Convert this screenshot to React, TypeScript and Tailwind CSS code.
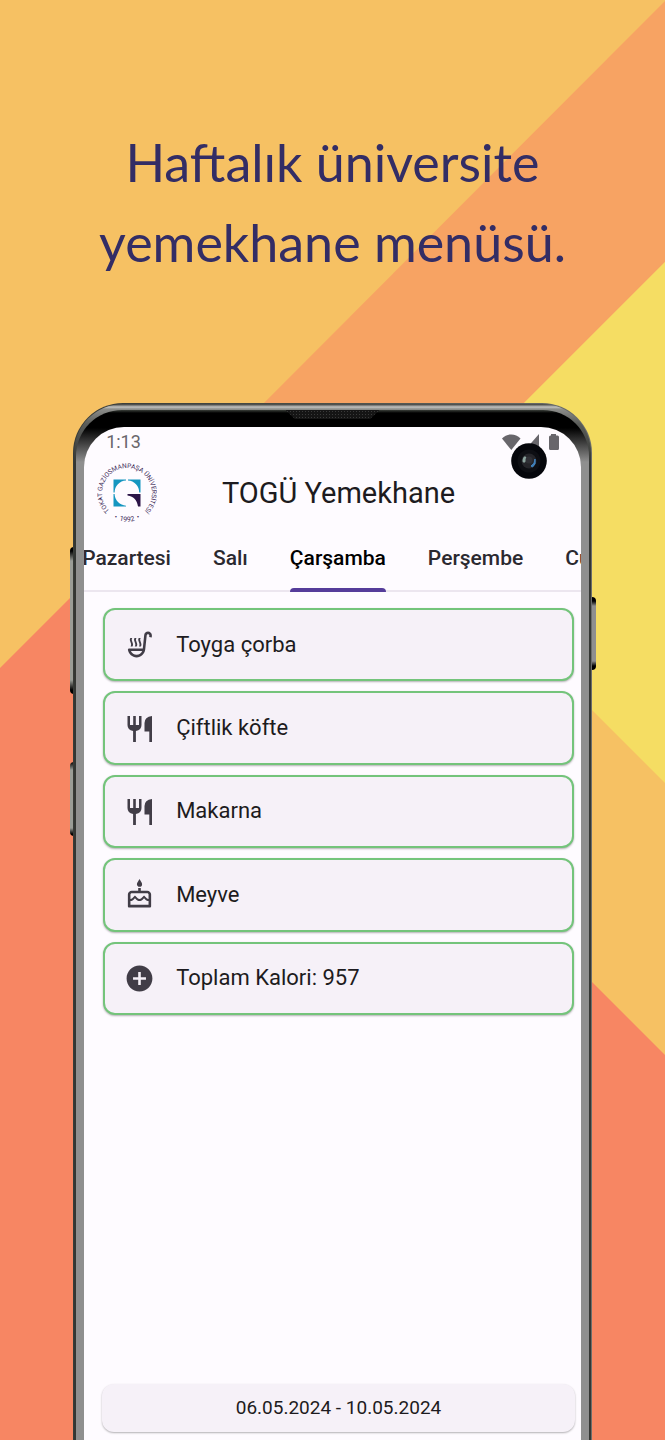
import { MdAddCircle, MdOutlineCake, MdOutlineSoupKitchen } from 'react-icons/md';
import type { ComponentType } from 'react';

function CutleryIcon({ className }: { className?: string }) {
  return (
    <svg className={className} viewBox="0 0 31 31" fill="currentColor" aria-hidden="true">
      <path d="M3.500 3H6V12H9.200V3H11.800V12H15V3H17.500V12Q17.500 17 11.900 18V29H9.100V18Q3.500 17 3.500 12Z" />
      <path d="M28 3V29H25.300V18.500H20.500V10Q20.500 4 28 3Z" />
    </svg>
  );
}

const days = ['Pazartesi', 'Salı', 'Çarşamba', 'Perşembe', 'Cuma'];
const activeDay = 'Çarşamba';

const dishes: { name: string; icon: ComponentType<{ className?: string }> }[] = [
  { name: 'Toyga çorba', icon: MdOutlineSoupKitchen },
  { name: 'Çiftlik köfte', icon: CutleryIcon },
  { name: 'Makarna', icon: CutleryIcon },
  { name: 'Meyve', icon: MdOutlineCake },
  { name: 'Toplam Kalori: 957', icon: MdAddCircle },
];

function Backdrop() {
  return (
    <svg
      className="absolute inset-0 h-full w-full"
      viewBox="0 0 665 1440"
      preserveAspectRatio="xMidYMid slice"
      aria-hidden="true"
    >
      <rect width="665" height="1440" fill="#f6c163" />
      <path d="M665 1V262L400 527L200 467Z" fill="#f7a363" />
      <path d="M665 262V783L400 518V527Z" fill="#f5dd63" />
      <path d="M0 668L200 468V590L665 1055V1440H0Z" fill="#f78663" />
    </svg>
  );
}

function UniversityLogo() {
  return (
    <svg className="size-[60px] shrink-0" viewBox="0 0 60 60" role="img" aria-label="Tokat Gaziosmanpaşa Üniversitesi">
      <defs>
        <path id="seal-name" d="M14.600 49.700A25 25 0 1 1 45.400 49.700" />
        <path id="seal-year" d="M8 48.500A29 29 0 0 0 52 48.500" />
      </defs>
      <path
        fill="#1596c0"
        d="M16.500 16.500H29V17.500A12 12 0 0 0 17.600 29.500H16.500ZM31 16.500H43.500V29.500H42.200A12 12 0 0 0 31 17.500ZM16.500 31H17.600A12 12 0 0 0 29 42.700V43.500H16.500Z"
      />
      <path fill="#2c1548" d="M30.500 31H43.500V43.500H41C40 37 37 33.500 30.500 32.500Z" />
      <text fill="#3d2a58" fontFamily="Roboto, sans-serif" fontSize="6.500">
        <textPath href="#seal-name" startOffset="50%" textAnchor="middle">
          TOKAT GAZİOSMANPAŞA ÜNİVERSİTESİ
        </textPath>
      </text>
      <text fill="#3d2a58" fontFamily="Roboto, sans-serif" fontSize="7">
        <textPath href="#seal-year" startOffset="50%" textAnchor="middle">
          {'•\u00a0\u00a01992\u00a0\u00a0•'}
        </textPath>
      </text>
    </svg>
  );
}

function StatusIcons() {
  return (
    <svg className="h-[18px] w-[58px]" viewBox="0 0 58 18" fill="#68666b" aria-hidden="true">
      <path d="M1 5.500C6 0 14.500 0 19.500 5.500L10.300 17Z" />
      <path d="M38 1V17H24Z" />
      <path d="M50 1H55V2.500H56.500Q58 2.500 58 4V15.500Q58 17 56.500 17H49.500Q48 17 48 15.500V4Q48 2.500 49.500 2.500H50Z" />
    </svg>
  );
}

function FrontCamera() {
  return (
    <svg className="absolute top-4 right-[34px] size-9" viewBox="0 0 36 36" aria-hidden="true">
      <circle cx="18" cy="18" r="17.800" fill="#05060b" />
      <circle cx="18" cy="18" r="11.500" fill="#0d0e13" />
      <circle cx="18" cy="18" r="7.500" fill="#25252a" />
      <ellipse cx="13.500" cy="16.500" rx="1.800" ry="3.200" fill="#8ba39d" transform="rotate(15 13.5 16.500)" />
      <path d="M20 23Q24 21 24 16Q25.500 21 21.500 24Z" fill="#4182bd" stroke="#4182bd" />
      <circle cx="18" cy="17" r="3.500" fill="#303036" />
    </svg>
  );
}

function PhoneHardware() {
  return (
    <div aria-hidden="true">
      <div className="absolute top-[144px] -left-[3px] h-[147px] w-1 rounded-l-sm bg-[linear-gradient(180deg,#000_0,#000_4px,#9a9c96_14px,#9a9c96_133px,#000_143px)]" />
      <div className="absolute top-[359px] -left-[3px] h-[74px] w-1 rounded-l-sm bg-[linear-gradient(180deg,#000_0,#9a9c96_8px,#9a9c96_66px,#000_72px)]" />
      <div className="absolute top-[194px] -right-1 h-[73px] w-1 rounded-r-sm bg-[linear-gradient(180deg,#000_0,#000_4px,#8f8f8f_9px,#8f8f8f_64px,#000_69px)]" />
    </div>
  );
}

function Screen() {
  return (
    <div className="relative flex grow flex-col overflow-hidden rounded-t-[40px] bg-[#fefbff] text-[#1d1b20]">
      <div className="flex h-[34px] items-center justify-between pr-[22px] pl-[22px] pb-1">
        <span className="text-lg leading-6 text-[#68666b]">1:13</span>
        <StatusIcons />
      </div>
      <FrontCamera />

      <header className="flex h-16 items-center px-[13px]">
        <UniversityLogo />
        <h2 className="grow pr-12 text-center text-[29px] leading-9 whitespace-nowrap">TOGÜ Yemekhane</h2>
      </header>

      <nav className="flex h-[67px] shrink-0 overflow-hidden bg-[linear-gradient(#ece6ef,#ece6ef)] bg-size-[100%_2px] bg-bottom bg-no-repeat">
        <div className="-ml-[2px] flex shrink-0 gap-[42px]">
          {days.map((day) => (
            <button
              key={day}
              type="button"
              aria-current={day === activeDay ? 'page' : undefined}
              className={
                day === activeDay
                  ? 'relative text-[21px] font-medium text-black after:absolute after:inset-x-0 after:bottom-0 after:h-1 after:rounded-t after:bg-[#553c9a]'
                  : 'text-[21px] font-medium text-[#2b2930]'
              }
            >
              {day}
            </button>
          ))}
        </div>
      </nav>

      <ul className="mt-4 mr-[7px] ml-[19px] grid min-h-[407px] auto-rows-fr gap-[10px]">
        {dishes.map(({ name, icon: Icon }) => (
          <li
            key={name}
            className="flex items-center gap-[21px] rounded-xl border-2 border-[#74c47b] bg-[#f6f1f8] px-[19px] shadow-[0_1px_2px_rgba(0,0,0,0.3)]"
          >
            <Icon className="size-[31px] shrink-0 text-[#413d47]" />
            <span className="text-[22px] leading-7">{name}</span>
          </li>
        ))}
      </ul>

      <footer className="mt-auto mr-[6px] mb-2 ml-[18px] rounded-xl bg-[#f6f1f8] py-3 text-center text-[19px] leading-6 shadow-[0_1px_2px_rgba(0,0,0,0.3)]">
        06.05.2024 - 10.05.2024
      </footer>
    </div>
  );
}

function Phone() {
  return (
    <div className="relative mx-[11%] flex grow flex-col">
      <PhoneHardware />
      <div className="relative flex grow flex-col rounded-t-[50px] bg-[linear-gradient(90deg,#383b37_0,#4c504a_50%,#6c6e6c_100%)] px-px pt-px">
        <div className="flex grow flex-col rounded-t-[49px] bg-[linear-gradient(180deg,#3a3b39_0,#c3c3c1_3px,#8d8e8b_5px,#5a5c59_20px,#343633_60px)] px-[2px] pt-[6px]">
          <div className="relative flex grow flex-col rounded-t-[46px] bg-[linear-gradient(180deg,#3a3f39_0,#000_3px,#000_18px,#8f8f8f_52px)] px-2 pt-[17px]">
            <div
              className="absolute top-0 left-1/2 h-[9px] w-[94px] -translate-x-1/2 bg-[radial-gradient(#3a3a3a_1px,#151515_1px)] bg-size-[3px_3px] [clip-path:polygon(0_0,100%_0,90%_100%,10%_100%)]"
              aria-hidden="true"
            />
            <Screen />
          </div>
        </div>
      </div>
    </div>
  );
}

export default function App() {
  return (
    <main className="relative flex min-h-screen flex-col overflow-hidden font-[Roboto,sans-serif]">
      <Backdrop />
      <h1 className="relative px-10 pt-[122px] pb-[121px] text-center font-[Lato,sans-serif] text-[52px] leading-[80px] text-[#332d65]">
        Haftalık üniversite <br />
        yemekhane menüsü.
      </h1>
      <Phone />
    </main>
  );
}
